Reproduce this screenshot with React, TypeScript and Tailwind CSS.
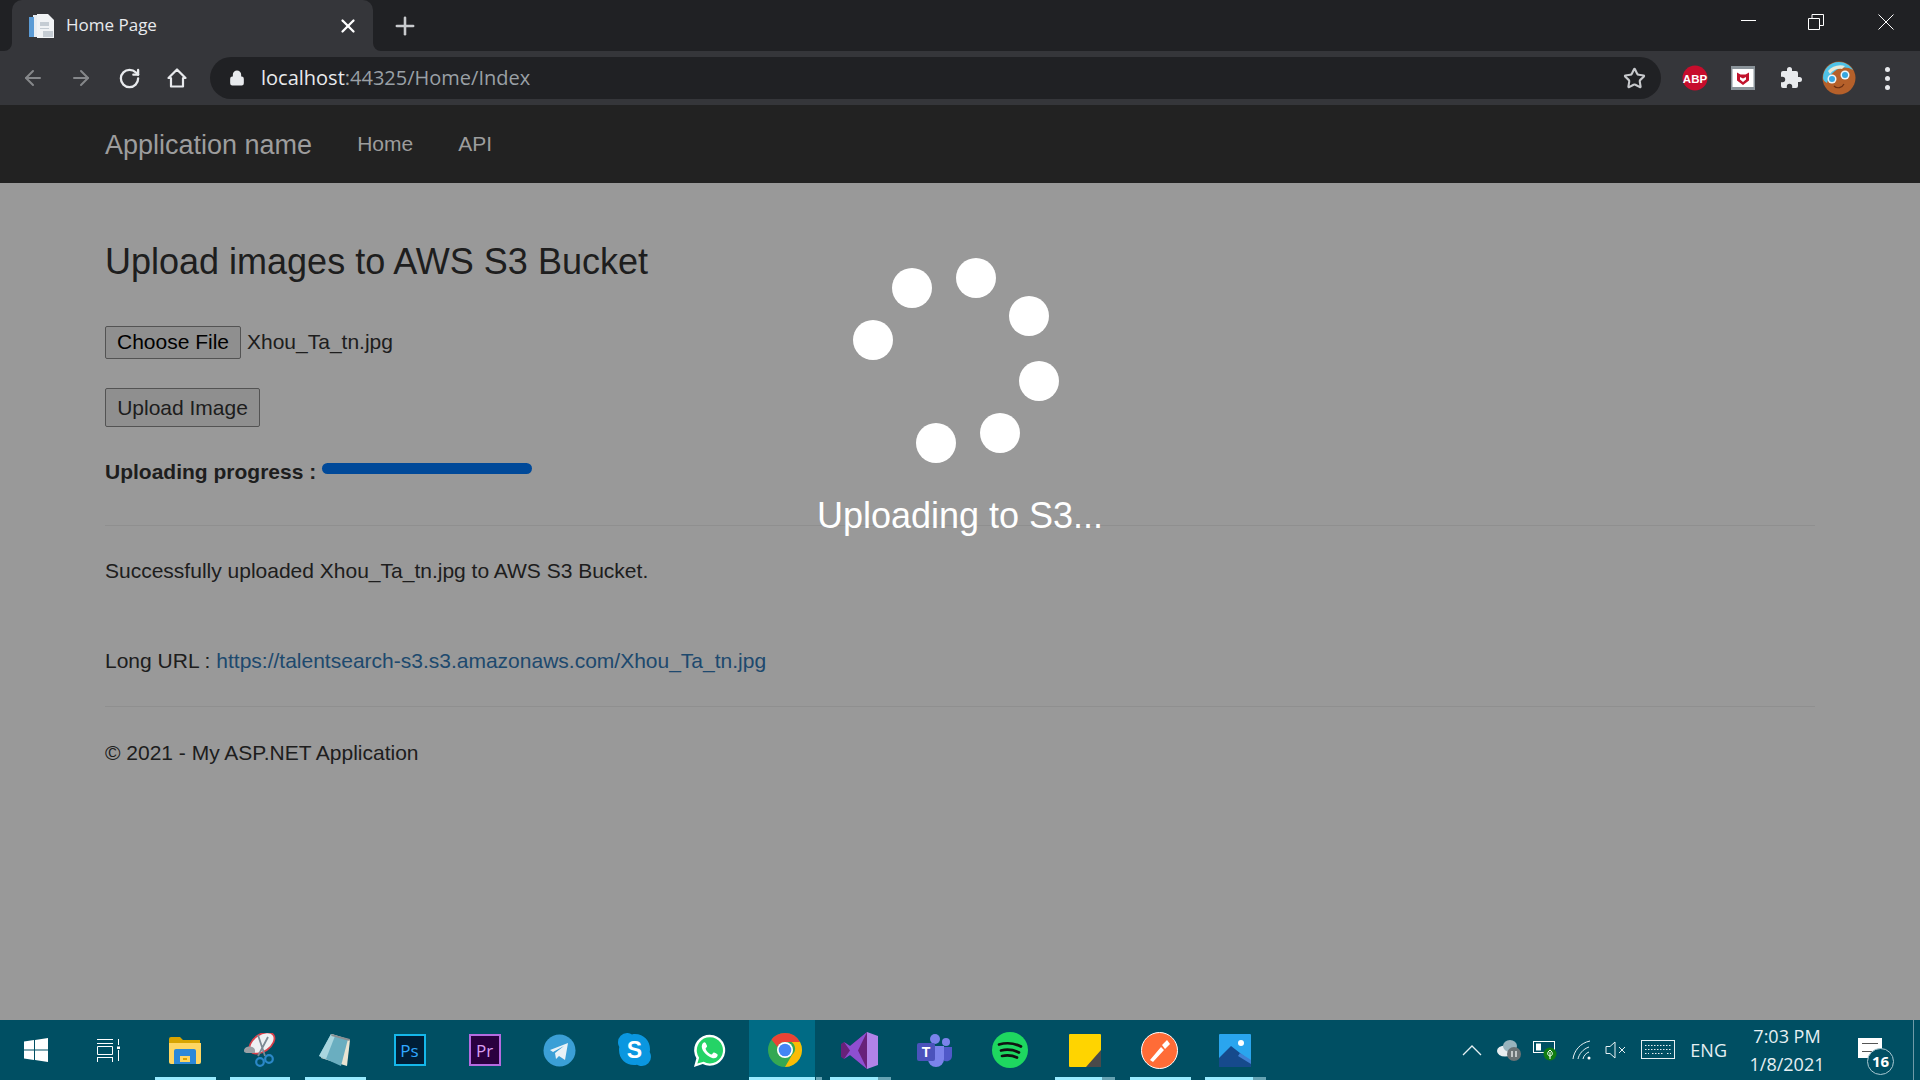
import { ArrowLeft, ArrowRight, Lock, Plus, RotateCw, Star, X } from "lucide-react";

const ui = "font-['Open_Sans','Noto_Sans',sans-serif]";
const arial = "font-['Liberation_Sans',Arial,sans-serif]";

function TabFavicon() {
  return (
    <svg width="25" height="24" viewBox="0 0 25 24">
      <path d="M4 1h9v22H4z" fill="#e8edf2" />
      <path d="M0 3h5v20H0z" fill="#5b9bd5" />
      <path d="M8 0h11l6 6v18H8z" fill="#f1f3f5" />
      <path d="M11 8h9v4h-9zM11 14h9v1h-9zM14 17h10v6H14z" fill="#c5ccd3" />
    </svg>
  );
}

function AbpIcon() {
  return (
    <svg width="26" height="26" viewBox="0 0 26 26">
      <circle cx="13" cy="13" r="12.5" fill="#c70d2c" />
      <text x="13" y="17.5" textAnchor="middle" fontSize="11.5" fontWeight="700" fill="#fff" fontFamily="Liberation Sans">ABP</text>
    </svg>
  );
}

function McAfeeIcon() {
  return (
    <svg width="24" height="24" viewBox="0 0 24 24">
      <rect width="24" height="24" fill="#fff" />
      <path d="M0 0h24v3H0zM0 21h24v3H0zM0 0h1.5v24H0zM22.5 0H24v24h-1.5z" fill="#8a9399" />
      <path d="M6 6.5l3.5 2h5l3.5-2v8L12 19l-6-4.5z" fill="#c1132d" />
      <path d="M9 11l3 1.5 3-1.5v2.5L12 16l-3-2.5z" fill="#fff" />
    </svg>
  );
}

function PuzzleIcon() {
  return (
    <svg width="24" height="24" viewBox="0 0 24 24" fill="#e8eaed">
      <path d="M20.5 11H19V7a2 2 0 0 0-2-2h-4V3.5a2.5 2.5 0 0 0-5 0V5H4a2 2 0 0 0-2 2v3.8h1.5a2.7 2.7 0 0 1 0 5.4H2V20a2 2 0 0 0 2 2h3.8v-1.5a2.7 2.7 0 0 1 5.4 0V22H17a2 2 0 0 0 2-2v-4h1.5a2.5 2.5 0 0 0 0-5z" />
    </svg>
  );
}

function Avatar() {
  return (
    <svg width="34" height="34" viewBox="0 0 34 34">
      <circle cx="17" cy="17" r="16.5" fill="#b5602a" />
      <path d="M1 17C1 8 8 1 17 1c6 0 11 3 14 8-6-4-13-3-18 1-4 3-7 7-8 12-2-1-4-3-4-5z" fill="#4fc3e8" />
      <path d="M6 10c4-5 11-7 17-5l-3 3c-5-1-9 1-12 5z" fill="#e9e9d8" />
      <circle cx="10" cy="18" r="4.5" fill="#eef6fa" />
      <circle cx="10" cy="18" r="3" fill="#36a6e0" />
      <circle cx="23" cy="14" r="4.5" fill="#eef6fa" />
      <circle cx="23" cy="14" r="3" fill="#36a6e0" />
      <path d="M12 25c3 3 8 2 10-2" stroke="#6b2f12" strokeWidth="1.2" fill="none" />
    </svg>
  );
}

function BrowserChrome() {
  return (
    <div className={`${ui} shrink-0`}>
      <div className="flex h-[51px] items-stretch bg-[#202124]">
        <div className="relative ml-[12px] flex w-[361px] items-center rounded-t-[10px] bg-[#35363a] pl-[17px] pr-[14px]">
          <svg className="absolute -left-[8px] bottom-0" width="8" height="8" viewBox="0 0 8 8">
            <path d="M8 0v8H0a8 8 0 0 0 8-8z" fill="#35363a" />
          </svg>
          <svg className="absolute -right-[8px] bottom-0" width="8" height="8" viewBox="0 0 8 8">
            <path d="M0 0v8h8a8 8 0 0 1-8-8z" fill="#35363a" />
          </svg>
          <TabFavicon />
          <span className="mb-[2px] ml-[12px] text-[17px] text-[#e8eaed]">Home Page</span>
          <X className="ml-auto text-white" size={22} strokeWidth={2.5} />
        </div>
        <div className="ml-[18px] flex items-center">
          <Plus className="text-[#c8cacd]" size={28} strokeWidth={2.2} />
        </div>
        <div className="ml-auto flex h-full items-start text-white">
          <div className="mt-[20px] mr-[52px] h-px w-[15px] bg-white" />
          <svg className="mt-[14px] mr-[54px]" width="16" height="16" viewBox="0 0 16 16" fill="none" stroke="#fff">
            <path d="M.5 4.500h11v11H.5zM4 4.500V.5h11.500v11h-4" />
          </svg>
          <svg className="mt-[14px] mr-[13px]" width="16" height="16" viewBox="0 0 16 16" stroke="#fff">
            <path d="M.5.5l15 15M15.500.5l-15 15" />
          </svg>
          <div className="w-[13px]" />
        </div>
      </div>
      <div className="flex h-[54px] items-center bg-[#35363a]">
        <ArrowLeft className="ml-[21px] text-[#85878a]" size={24} />
        <ArrowRight className="ml-[24px] text-[#85878a]" size={24} />
        <RotateCw className="ml-[25px] text-[#e8eaed]" size={23} strokeWidth={2.4} />
        <svg className="ml-[24px]" width="24" height="24" viewBox="0 0 24 24" fill="none" stroke="#e8eaed" strokeWidth="2.2">
          <path d="M12 3.500L3.500 12H6v8.500h12V12h2.500z" strokeLinejoin="round" />
        </svg>
        <div className="ml-[21px] flex h-[42px] w-[1451px] items-center rounded-full bg-[#202124] pl-[19px] pr-[15px]">
          <Lock className="fill-[#e8eaed] text-[#e8eaed]" size={16} strokeWidth={2.5} />
          <span className="ml-[16px] text-[20px] text-[#e8eaed]">
            localhost<span className="text-[#9aa0a6]">:44325/Home/Index</span>
          </span>
          <Star className="ml-auto text-[#c7c9cc]" size={23} strokeWidth={2.2} />
        </div>
        <div className="ml-[21px]"><AbpIcon /></div>
        <div className="ml-[23px]"><McAfeeIcon /></div>
        <div className="ml-[24px]"><PuzzleIcon /></div>
        <div className="ml-[19px]"><Avatar /></div>
        <div className="ml-[29px] flex flex-col gap-[4px]">
          <span className="size-[5px] rounded-full bg-[#e8eaed]" />
          <span className="size-[5px] rounded-full bg-[#e8eaed]" />
          <span className="size-[5px] rounded-full bg-[#e8eaed]" />
        </div>
      </div>
    </div>
  );
}

function Spinner() {
  const dots = [
    [912, 288],
    [976, 278],
    [1029, 316],
    [1039, 381],
    [1000, 433],
    [936, 443],
    [873, 340],
  ];
  return (
    <svg width="220" height="220" viewBox="850 250 220 220">
      {dots.map(([x, y]) => (
        <circle key={x} cx={x} cy={y} r="20" fill="#fff" />
      ))}
    </svg>
  );
}

function AspPage() {
  return (
    <main className={`${arial} relative flex-1 overflow-hidden bg-white text-[#333]`}>
      <div className="px-[105px] pt-[57px] text-[21px] leading-[30px]">
        <h2 className="text-[36px] leading-[44px]">Upload images to AWS S3 Bucket</h2>
        <div className="mt-[41px] flex h-[34px] items-center">
          <span className="flex h-[33px] w-[136px] items-center justify-center rounded-[2px] border border-[#8a8a8a] bg-[#efefef] text-black">
            Choose File
          </span>
          <span className="ml-[6px]">Xhou_Ta_tn.jpg</span>
        </div>
        <div className="mt-[29px] flex h-[39px] w-[155px] items-center justify-center rounded-[2px] border border-[#8a8a8a] bg-[#efefef]">
          Upload Image
        </div>
        <div className="mt-[30px] flex h-[30px] items-center">
          <strong>Uploading progress :</strong>
          <div className="mb-[8px] ml-[6px] h-[11px] w-[210px] rounded-full bg-[#007bff]" />
        </div>
        <hr className="mt-[38px] border-t border-[#eee]" />
        <p className="mt-[30px]">Successfully uploaded Xhou_Ta_tn.jpg to AWS S3 Bucket.</p>
        <p className="mt-[60px]">
          Long URL : <span className="text-[#337ab7]">https://talentsearch-s3.s3.amazonaws.com/Xhou_Ta_tn.jpg</span>
        </p>
        <hr className="mt-[30px] border-t border-[#eee]" />
        <p className="mt-[31px]">© 2021 - My ASP.NET Application</p>
      </div>
      <div className="absolute inset-0 flex flex-col items-center bg-black/40 pt-[67px]">
        <Spinner />
        <div className="mt-[24px] text-[36px] leading-[44px] text-white">Uploading to S3...</div>
      </div>
    </main>
  );
}

function TaskButton({ children, line, stack, active }: { children: React.ReactNode; line?: number; stack?: boolean; active?: boolean }) {
  return (
    <div className="relative flex h-full w-[75px] shrink-0 items-center justify-center">
      {active ? (
        <>
          <div className="absolute inset-y-0 left-[2px] w-[66px] bg-[#006b85]" />
          <div className="absolute bottom-0 left-[2px] h-[3px] w-[66px] bg-[#99ebff]" />
          <div className="absolute bottom-0 left-[69px] h-[3px] w-[6px] bg-[#66a3b3]" />
        </>
      ) : null}
      <div className="relative flex items-center justify-center">{children}</div>
      {line ? (
        <div className="absolute bottom-0 left-[8px] flex h-[3px]">
          <div className="bg-[#99ebff]" style={{ width: line }} />
          {stack ? <div className="w-[13px] bg-[#66a3b3]" /> : null}
        </div>
      ) : null}
    </div>
  );
}

const Explorer = () => (
  <svg width="32" height="28" viewBox="0 0 32 28">
    <path d="M0 3a2 2 0 0 1 2-2h9l3 3h17v6H0z" fill="#d8a400" />
    <path d="M0 7h32v19a2 2 0 0 1-2 2H2a2 2 0 0 1-2-2z" fill="#ffd661" />
    <path d="M7 13h18a2 2 0 0 1 2 2v13H5V15a2 2 0 0 1 2-2z" fill="#2b88d8" />
    <path d="M11 20h10v6H11z" fill="#ffd661" />
    <path d="M14 22h4v2h-4z" fill="#d8a400" />
  </svg>
);

const Snip = () => (
  <svg width="34" height="34" viewBox="0 0 34 34">
    <ellipse cx="19" cy="10" rx="14" ry="8.500" transform="rotate(-35 19 10)" fill="#eef1f3" stroke="#d9404a" strokeWidth="1.800" />
    <path d="M1 18a5.500 4 0 0 1 11-1v3H5c-2.500 0-4-.5-4-2z" fill="#9aa0a5" />
    <path d="M15 2l7 21M25 4L15 23" stroke="#7d8a94" strokeWidth="1.800" />
    <circle cx="26" cy="26" r="3.800" fill="none" stroke="#2b88c8" strokeWidth="2.200" />
    <circle cx="17" cy="29" r="3.800" fill="none" stroke="#2b88c8" strokeWidth="2.200" />
  </svg>
);

const Notepad = () => (
  <svg width="32" height="32" viewBox="0 0 32 32">
    <path d="M13 0l18 6-3 26L2 24z" fill="#e9e4d2" />
    <path d="M12 0l17 5-7 27L0 22z" fill="#6aaec0" />
    <path d="M12 0L0 22l7 3L16 2z" fill="#a9d6df" />
    <path d="M12 0l19 5-.5 2-18-5z" fill="#8a8f92" />
  </svg>
);

const AdobeBadge = ({ label, border, bg }: { label: string; border: string; bg: string }) => (
  <div className={`${border} ${bg} flex h-[32px] w-[32px] items-center justify-center border-2 font-['Open_Sans',sans-serif] text-[17px] leading-none`}>
    {label}
  </div>
);

const Telegram = () => (
  <svg width="33" height="33" viewBox="0 0 33 33">
    <circle cx="16.500" cy="16.500" r="16" fill="#3b9fd6" />
    <path d="M7 16L25 9l-3 17-6-4-3 3-1-6 9-7-11 6z" fill="#e9f2f7" />
  </svg>
);

const Skype = () => (
  <svg width="33" height="34" viewBox="0 0 33 34">
    <path d="M9 0a8 8 0 0 1 5 1.500C15 1 16 1 17 1c9 0 15 7 15 15 0 1 0 2-.3 3 .8 1.500 1.300 3 1.300 5a9 9 0 0 1-9 9c-2 0-3.500-.5-5-1.300-1 .2-2 .3-3 .3-8 0-15-6-15-15 0-1 0-2 .3-3C.5 12.500 0 11 0 9a9 9 0 0 1 9-9z" fill="#0a97e0" />
    <text x="16.500" y="25" textAnchor="middle" fontSize="23" fontWeight="700" fill="#fff" fontFamily="Liberation Sans">S</text>
  </svg>
);

const WhatsApp = () => (
  <svg width="33" height="33" viewBox="0 0 34 34">
    <path d="M1 34l2.500-9A16 16 0 1 1 10 31z" fill="#fff" />
    <path d="M4.500 30.500l1.800-6A13.500 13.500 0 1 1 11 28.700z" fill="#25d366" />
    <path d="M12 8.500c-1 0-3 1.500-3 4.500 0 5 6.500 11 11.500 12 3 .5 5-1.500 5-3.500 0-1-3.500-2.500-4-2.500-1 0-1.500 2-2.500 2-2 0-6-4-6-6 0-1 1.500-1.500 1.500-2.500 0-.5-1.500-4-2.500-4z" fill="#fff" />
  </svg>
);

const ChromeLogo = () => (
  <svg width="34" height="34" viewBox="0 0 34 34">
    <circle cx="17" cy="17" r="17" fill="#34a853" />
    <path d="M17 0a17 17 0 0 1 15 9H17a8 8 0 0 0-7.500 5L3.500 6.500A17 17 0 0 1 17 0z" fill="#ea4335" />
    <path d="M32 9a17 17 0 0 1-15 25l7-12a8 8 0 0 0-.5-13z" fill="#fbbc05" />
    <circle cx="17" cy="17" r="8" fill="#fff" />
    <circle cx="17" cy="17" r="6.300" fill="#4285f4" />
  </svg>
);

const VisualStudio = () => (
  <svg width="37" height="37" viewBox="0 0 37 37">
    <path d="M26 0l11 4v29l-11 4z" fill="#b283e8" />
    <path d="M26 0v37L9 23l-6 4-3-2V12l3-2 6 4z" fill="#68217a" />
    <path d="M26 0L9 14 3 10l6 8.500L3 27l6-4 17 14-9-18.500z" fill="#8e4fd1" />
  </svg>
);

const Teams = () => (
  <svg width="35" height="33" viewBox="0 0 35 33">
    <circle cx="29" cy="8" r="4" fill="#7b83eb" />
    <circle cx="18" cy="5" r="5" fill="#7b83eb" />
    <path d="M25 13h10v9a5.500 5.500 0 0 1-9 4z" fill="#5059c9" />
    <path d="M11 12h16v13a8 8 0 0 1-16 0z" fill="#7b83eb" />
    <rect x="0" y="9" width="18" height="18" rx="2" fill="#4b53bc" />
    <text x="9" y="23" textAnchor="middle" fontSize="14" fontWeight="700" fill="#fff" fontFamily="Liberation Sans">T</text>
  </svg>
);

const Spotify = () => (
  <svg width="36" height="36" viewBox="0 0 36 36">
    <circle cx="18" cy="18" r="18" fill="#1ed760" />
    <path d="M7 12.500c7-2 15-1.500 22 2M9 18.500c6-1.500 12-1 18 2M10 24c5-1 10-.8 15 1.500" stroke="#111" strokeWidth="2.700" strokeLinecap="round" fill="none" />
  </svg>
);

const Sticky = () => (
  <svg width="32" height="33" viewBox="0 0 32 33">
    <rect width="32" height="33" rx="1" fill="#ffd400" />
    <path d="M32 16L17 33h15z" fill="#4a4a4a" />
  </svg>
);

const Postman = () => (
  <svg width="37" height="37" viewBox="0 0 37 37">
    <circle cx="18.500" cy="18.500" r="18" fill="#ff6c37" stroke="#fff" strokeWidth="1" />
    <path d="M9 28l11-13 3 3-11 12zM21 13l5-5 3 4-5 5z" fill="#fff" />
  </svg>
);

const Photos = () => (
  <svg width="32" height="33" viewBox="0 0 32 33">
    <rect width="32" height="33" fill="#2aa5ee" rx="1" />
    <circle cx="22" cy="9" r="3" fill="#fff" />
    <path d="M0 24l12-12 9 7 11 9v5H0z" fill="#164a8c" />
    <path d="M21 19l11 7v4L19 22z" fill="#3f7fd3" />
  </svg>
);

function Taskbar() {
  return (
    <footer className={`${ui} flex h-[60px] shrink-0 items-stretch bg-[#004f63] text-[#e6f0f3]`}>
      <div className="flex w-[72px] items-center justify-center">
        <svg width="24" height="24" viewBox="0 0 24 24" fill="#fff">
          <path d="M0 3.500l10-1.400v9.400H0zM11 2l13-2v11.500H11zM0 12.500h10v9.400L0 20.500zM11 12.500h13V24l-13-2z" />
        </svg>
      </div>
      <div className="flex w-[75px] items-center justify-center pr-[3px]">
        <svg width="24" height="24" viewBox="0 0 24 24" fill="none" stroke="#fff">
          <path d="M1 1.500h16M1 5.500h16M1.500 8.500h15v8h-15zM1 19.500h16M1.500 19.500V24M16.500 19.500V24M22.500 1v6M22.500 12v11" />
          <rect x="21" y="8.500" width="3" height="2.500" fill="#fff" stroke="none" />
        </svg>
      </div>
      <TaskButton line={61}><Explorer /></TaskButton>
      <TaskButton line={60}><Snip /></TaskButton>
      <TaskButton line={61}><Notepad /></TaskButton>
      <TaskButton>
        <AdobeBadge label="Ps" border="border-[#15b7ea]" bg="bg-[#001e36] text-[#31a8ff]" />
      </TaskButton>
      <TaskButton>
        <AdobeBadge label="Pr" border="border-[#b56be0]" bg="bg-[#2a003f] text-[#d99ef2]" />
      </TaskButton>
      <TaskButton><Telegram /></TaskButton>
      <TaskButton><Skype /></TaskButton>
      <TaskButton><WhatsApp /></TaskButton>
      <TaskButton active><ChromeLogo /></TaskButton>
      <TaskButton line={48} stack><VisualStudio /></TaskButton>
      <TaskButton><Teams /></TaskButton>
      <TaskButton><Spotify /></TaskButton>
      <TaskButton line={47} stack><Sticky /></TaskButton>
      <TaskButton line={61}><Postman /></TaskButton>
      <TaskButton line={48} stack><Photos /></TaskButton>

      <div className="ml-auto flex items-center">
        <svg width="20" height="12" viewBox="0 0 20 12" fill="none" stroke="#e6f0f3" strokeWidth="1.300">
          <path d="M1 11l9-9 9 9" />
        </svg>
        <svg className="ml-[14px]" width="26" height="24" viewBox="0 0 26 24">
          <ellipse cx="9" cy="13" rx="8" ry="5.500" fill="#e8eef0" />
          <ellipse cx="14" cy="8" rx="7" ry="6" fill="#9ab4bd" />
          <circle cx="18" cy="16" r="7" fill="#6b7275" />
          <path d="M16 13v6M20 13v6" stroke="#fff" strokeWidth="1.200" />
        </svg>
        <svg className="ml-[11px]" width="25" height="22" viewBox="0 0 25 22">
          <rect x=".5" y="2.500" width="21" height="11" fill="none" stroke="#fff" />
          <rect x="3" y="4.500" width="5" height="7" fill="#fff" />
          <circle cx="17" cy="15" r="6.500" fill="#107c10" />
          <path d="M17 11c-4 3-2 6 0 6s4-3 0-6zM17 13v7" stroke="#fff" fill="none" />
        </svg>
        <svg className="ml-[14px]" width="20" height="20" viewBox="0 0 20 20" fill="none" stroke="#e6f0f3">
          <path d="M1 19C2 11 8 3 18 1M6 19c1-5 5-10 11-12M11 19c.5-3 3-6 6-7" />
          <circle cx="17" cy="18" r="1.500" fill="#fff" stroke="none" />
        </svg>
        <svg className="ml-[13px]" width="22" height="18" viewBox="0 0 22 18" fill="none" stroke="#e6f0f3">
          <path d="M1 5.500h4L10 1v16l-5-4.500H1zM14 6l6 6M20 6l-6 6" />
        </svg>
        <svg className="ml-[14px]" width="34" height="20" viewBox="0 0 34 20" fill="none" stroke="#e6f0f3">
          <rect x=".5" y=".5" width="33" height="18" />
          <path d="M4 5.500h26M4 9.500h26M4 13.500h4M11 13.500h12M26 13.500h4" strokeDasharray="1.500 1.500" />
        </svg>
        <span className="ml-[15px] text-[18px]">ENG</span>
        <div className="ml-[20px] flex w-[80px] flex-col items-center text-[18px] leading-[28px]">
          <span>7:03 PM</span>
          <span>1/8/2021</span>
        </div>
        <div className="relative mb-[4px] ml-[31px] mr-[31px] h-[20px] w-[24px] bg-white">
          <div className="absolute left-[4px] top-[5px] h-[9px] w-[16px] border-y border-[#555]" />
          <div className="absolute left-[9px] top-[10px] flex size-[27px] items-center justify-center rounded-full border border-[#a8c8d2] bg-[#004f63] text-[15px] font-bold text-white">
            16
          </div>
        </div>
        <div className="h-full w-px bg-[#6f9aa8]" />
        <div className="w-[6px]" />
      </div>
    </footer>
  );
}

export default function App() {
  return (
    <div className="flex h-screen w-full flex-col overflow-hidden">
      <BrowserChrome />
      <nav className={`${arial} flex h-[78px] shrink-0 items-center bg-[#222] pl-[105px] text-[#9d9d9d]`}>
        <span className="pt-[2px] text-[27px]">Application name</span>
        <span className="ml-[45px] text-[21px]">Home</span>
        <span className="ml-[45px] text-[21px]">API</span>
      </nav>
      <AspPage />
      <Taskbar />
    </div>
  );
}
